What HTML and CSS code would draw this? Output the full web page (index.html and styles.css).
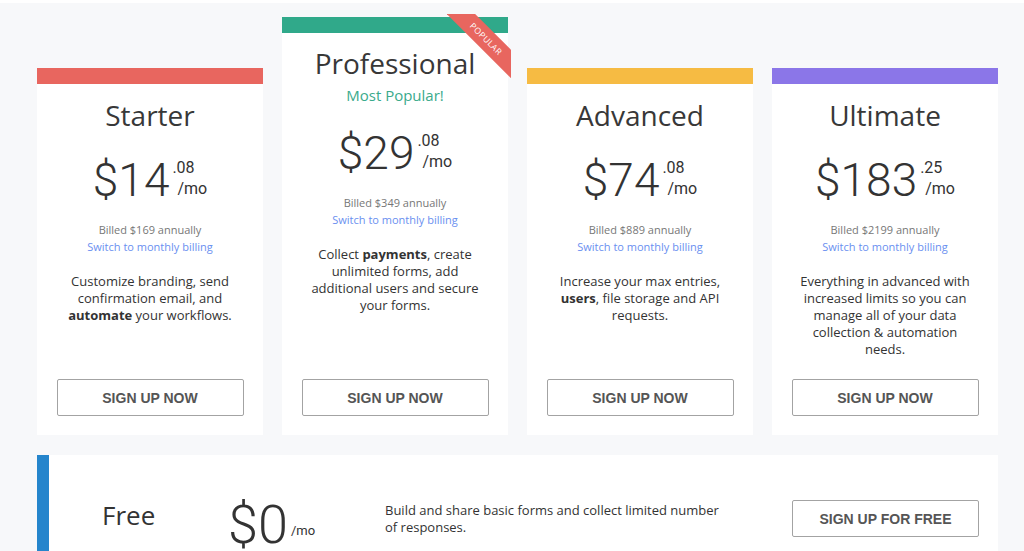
FILE: index.html
```html
<!DOCTYPE html>
<html lang="en">
<head>
<meta charset="utf-8">
<title>Pricing</title>
<link rel="stylesheet" href="styles.css">
</head>
<body>
<div class="page">
  <div class="plans">
    <div class="card">
      <div class="bar bar-red"></div>
      <h2 class="title">Starter</h2>
      <div class="price"><span class="amount">$14</span><span class="cents"><span class="dec">.08</span><span class="per">/mo</span></span></div>
      <div class="billed">Billed $169 annually</div>
      <a class="switch" href="#">Switch to monthly billing</a>
      <p class="desc">Customize branding, send<br>confirmation email, and<br><b>automate</b> your workflows.</p>
      <a class="btn" href="#">SIGN UP NOW</a>
    </div>
    <div class="card card-pro">
      <div class="bar bar-green"></div>
      <div class="ribbon"><span class="ribbon-band">Popular</span></div>
      <h2 class="title title-pro">Professional</h2>
      <div class="popular">Most Popular!</div>
      <div class="price"><span class="amount">$29</span><span class="cents"><span class="dec">.08</span><span class="per">/mo</span></span></div>
      <div class="billed">Billed $349 annually</div>
      <a class="switch" href="#">Switch to monthly billing</a>
      <p class="desc">Collect <b>payments</b>, create<br>unlimited forms, add<br>additional users and secure<br>your forms.</p>
      <a class="btn" href="#">SIGN UP NOW</a>
    </div>
    <div class="card">
      <div class="bar bar-yellow"></div>
      <h2 class="title">Advanced</h2>
      <div class="price"><span class="amount">$74</span><span class="cents"><span class="dec">.08</span><span class="per">/mo</span></span></div>
      <div class="billed">Billed $889 annually</div>
      <a class="switch" href="#">Switch to monthly billing</a>
      <p class="desc">Increase your max entries,<br><b>users</b>, file storage and API<br>requests.</p>
      <a class="btn" href="#">SIGN UP NOW</a>
    </div>
    <div class="card">
      <div class="bar bar-purple"></div>
      <h2 class="title">Ultimate</h2>
      <div class="price"><span class="amount">$183</span><span class="cents"><span class="dec">.25</span><span class="per">/mo</span></span></div>
      <div class="billed">Billed $2199 annually</div>
      <a class="switch" href="#">Switch to monthly billing</a>
      <p class="desc">Everything in advanced with<br>increased limits so you can<br>manage all of your data<br>collection &amp; automation<br>needs.</p>
      <a class="btn" href="#">SIGN UP NOW</a>
    </div>
  </div>
  <div class="free">
    <div class="free-bar"></div>
    <div class="free-name">Free</div>
    <div class="free-price"><span class="free-amount">$0</span><span class="free-per">/mo</span></div>
    <p class="free-desc">Build and share basic forms and collect limited number<br>of responses.</p>
    <a class="btn btn-free" href="#">SIGN UP FOR FREE</a>
  </div>
</div>
</body>
</html>
```
FILE: styles.css
```css
html, body {
  margin: 0;
  padding: 0;
  overflow: hidden;
  background: #f7f8fa;
}
body {
  font-family: "Open Sans", "Noto Sans", sans-serif;
  color: #333;
}
.page {
  border-top: 3px solid #ffffff;
  padding: 14px 26px 0 37px;
}
.plans {
  display: flex;
  align-items: flex-end;
  gap: 19px;
  width: 961px;
}
.card {
  position: relative;
  width: 226px;
  height: 367px;
  background: #ffffff;
  display: flex;
  flex-direction: column;
  align-items: center;
  text-align: center;
}
.card-pro {
  height: 418px;
}
.bar {
  align-self: stretch;
  height: 16px;
  flex: none;
}
.bar-red { background: #e8665f; }
.bar-green { background: #30a98a; }
.bar-yellow { background: #f6bb43; }
.bar-purple { background: #8b76e8; }
.title {
  margin: 14px 0 0;
  font-size: 28px;
  line-height: 34px;
  font-weight: 400;
  color: #383838;
}
.title-pro {
  margin-top: 13px;
}
.popular {
  margin-top: 5px;
  font-size: 15px;
  line-height: 20px;
  color: #3aaa8c;
}
.price {
  margin-top: 25px;
  display: flex;
  align-items: flex-start;
  height: 46px;
}
.amount {
  font-family: Roboto, "Liberation Sans", sans-serif;
  font-size: 46px;
  line-height: 46px;
  font-weight: 300;
  color: #333;
}
.cents {
  display: flex;
  flex-direction: column;
  align-items: flex-start;
  padding-top: 2px;
  margin-left: 3px;
  font-family: Roboto, "Liberation Sans", sans-serif;
  font-size: 16px;
  line-height: 18px;
  font-weight: 400;
  color: #333;
  text-align: left;
}
.per {
  margin-top: 3px;
  margin-left: 5px;
}
.billed {
  margin-top: 18px;
  font-size: 11px;
  line-height: 17px;
  color: #777;
}
.switch {
  font-size: 11px;
  line-height: 17px;
  color: #6a8ff0;
  text-decoration: none;
}
.desc {
  margin: 18px 0 0;
  padding: 0 12px;
  font-size: 13px;
  line-height: 17px;
  color: #333;
}
.desc b {
  font-weight: 700;
}
.btn {
  margin-top: auto;
  margin-bottom: 19px;
  box-sizing: border-box;
  width: 187px;
  height: 37px;
  border: 1px solid #a3a3a3;
  border-radius: 2px;
  display: flex;
  align-items: center;
  justify-content: center;
  font-family: "Liberation Sans", Arial, sans-serif;
  font-weight: 700;
  font-size: 14px;
  color: #555;
  text-decoration: none;
  background: #fff;
}
.ribbon {
  position: absolute;
  top: -3px;
  right: -3px;
  width: 64px;
  height: 64px;
  overflow: hidden;
}
.ribbon-band {
  position: absolute;
  left: -11px;
  top: 15px;
  width: 100px;
  height: 20px;
  line-height: 20px;
  background: #e8665f;
  color: #fff;
  font-size: 8.5px;
  letter-spacing: 0.5px;
  text-transform: uppercase;
  text-align: center;
  transform: rotate(45deg);
}
.free {
  margin-top: 20px;
  width: 961px;
  height: 127px;
  background: #fff;
  display: flex;
  align-items: center;
}
.free-bar {
  align-self: stretch;
  width: 12px;
  background: #2585cc;
  flex: none;
}
.free-name {
  margin: 0 0 7px 53px;
  width: 126px;
  font-size: 26px;
  line-height: 30px;
  color: #333;
  flex: none;
}
.free-price {
  width: 157px;
  flex: none;
  display: flex;
  align-items: flex-end;
  margin-top: 13px;
}
.free-amount {
  font-family: Roboto, "Liberation Sans", sans-serif;
  font-size: 54px;
  line-height: 46px;
  font-weight: 300;
  color: #333;
}
.free-per {
  margin: 0 0 9px 3px;
  font-family: Roboto, "Liberation Sans", sans-serif;
  font-size: 13px;
  line-height: 16px;
  color: #333;
}
.free-desc {
  margin: 0;
  font-size: 13px;
  line-height: 17px;
  color: #333;
  flex: 1;
}
.btn-free {
  margin: 0 19px 0 0;
  flex: none;
}
```
